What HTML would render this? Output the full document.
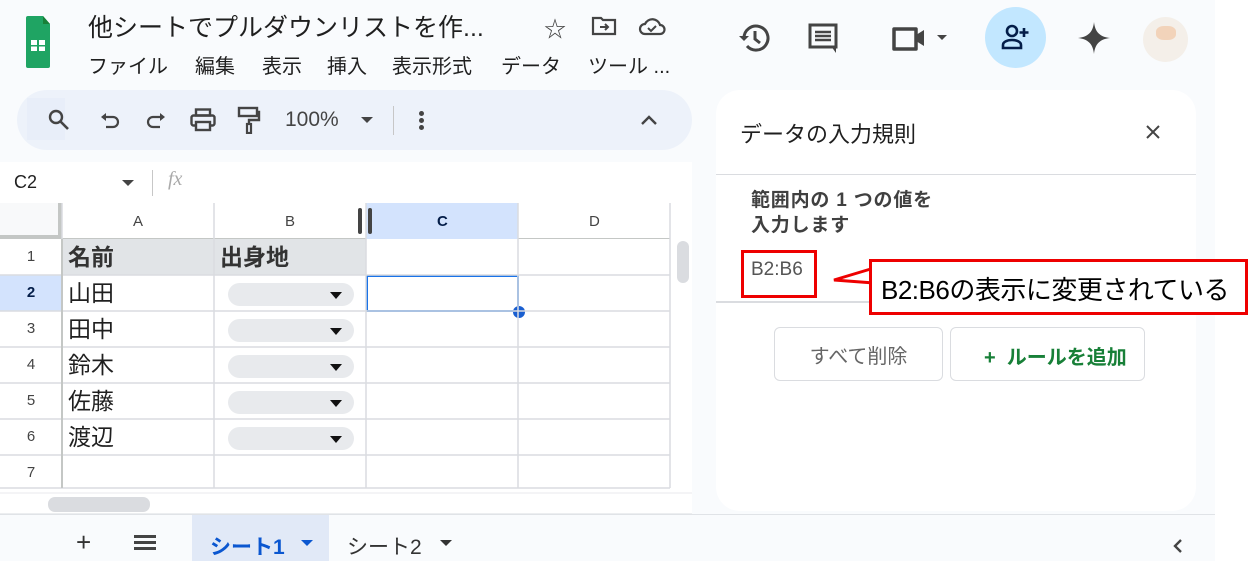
<!DOCTYPE html>
<html><head><meta charset="utf-8"><style>
*{box-sizing:border-box;margin:0;padding:0}
body{width:1248px;height:561px;overflow:hidden;background:#f9fbfd;font-family:"Liberation Sans","Noto Sans CJK JP",sans-serif;position:relative;color:#1f1f1f}
.a{position:absolute}
.ic{position:absolute}
.grid div{position:absolute}
.m{position:absolute;top:50px;font-size:20px;color:#1f1f1f;white-space:nowrap}
</style></head><body>
<!-- logo -->
<svg class="ic" style="left:26px;top:16px" width="24" height="52" viewBox="0 0 24 52"><path d="M2 0h15l7 8v42a2 2 0 0 1-2 2H2a2 2 0 0 1-2-2V2a2 2 0 0 1 2-2z" fill="#1fa463"/><path d="M17 0v8h7z" fill="#188038"/><rect x="5" y="24" width="14" height="11" fill="#fff"/><rect x="11" y="24" width="2" height="11" fill="#1fa463"/><rect x="5" y="29" width="14" height="1.5" fill="#1fa463"/></svg>
<div class="a" style="left:88px;top:8px;font-size:25px;color:#1f1f1f;white-space:nowrap">他シートでプルダウンリストを作...</div>
<div class="m" style="left:88px">ファイル</div>
<div class="m" style="left:195px">編集</div>
<div class="m" style="left:262px">表示</div>
<div class="m" style="left:327px">挿入</div>
<div class="m" style="left:392px">表示形式</div>
<div class="m" style="left:501px">データ</div>
<div class="m" style="left:588px">ツール ...</div>
<div class="a" style="left:544px;top:12px;font-size:22px;color:#444">☆</div>
<svg class="ic" style="left:591px;top:16px" width="26" height="20" viewBox="0 0 26 20"><path d="M2 2h8l2 2h12v14H2z" fill="none" stroke="#444" stroke-width="2.2"/><path d="M9 11h8M14 8l3 3-3 3" fill="none" stroke="#444" stroke-width="2"/></svg>
<svg class="ic" style="left:638px;top:16px" width="28" height="20" viewBox="0 0 28 20"><path d="M7 18a5 5 0 0 1 0-10 8 8 0 0 1 15 1 4.5 4.5 0 0 1 0 9z" fill="none" stroke="#444" stroke-width="2.2"/><path d="M10 12l3 3 5-5" fill="none" stroke="#444" stroke-width="2"/></svg>
<!-- right top icons -->
<svg class="ic" style="left:738px;top:22px" width="34" height="32" viewBox="0 0 34 32"><path d="M6 16a12 12 0 1 1 3 8" fill="none" stroke="#444" stroke-width="3"/><path d="M1 14l5 5 5-5" fill="#444"/><path d="M17 9v8l5 4" fill="none" stroke="#444" stroke-width="3"/></svg>
<svg class="ic" style="left:807px;top:22px" width="32" height="32" viewBox="0 0 32 32"><path d="M3 3h26v22H3z" fill="none" stroke="#444" stroke-width="3"/><path d="M8 10h16M8 14h16M8 18h16" stroke="#444" stroke-width="2.5"/><path d="M24 24h5v7z" fill="#444"/></svg>
<svg class="ic" style="left:892px;top:25px" width="60" height="26" viewBox="0 0 60 26"><path d="M2 4h22v20H2z" fill="none" stroke="#444" stroke-width="3.5" stroke-linejoin="round"/><path d="M24 10l8-5v16l-8-5z" fill="#444"/><path d="M45 10h10l-5 5z" fill="#444"/></svg>
<div class="a" style="left:985px;top:7px;width:61px;height:61px;border-radius:50%;background:#c2e7ff"></div>
<svg class="ic" style="left:1001px;top:24px" width="30" height="26" viewBox="0 0 30 26"><circle cx="11" cy="7" r="5" fill="none" stroke="#041e49" stroke-width="2.6"/><path d="M2 24v-3c0-3 4-5 9-5s9 2 9 5v3z" fill="none" stroke="#041e49" stroke-width="2.6"/><path d="M23 4v9M18.5 8.5h9" stroke="#041e49" stroke-width="2.6"/></svg>
<svg class="ic" style="left:1078px;top:22px" width="32" height="32" viewBox="0 0 32 32"><path d="M16 0C17 10 22 15 32 16 22 17 17 22 16 32 15 22 10 17 0 16 10 15 15 10 16 0z" fill="#444"/></svg>
<div class="a" style="left:1143px;top:17px;width:45px;height:45px;border-radius:50%;background:#f4efe9"></div>
<div class="a" style="left:1156px;top:26px;width:20px;height:14px;border-radius:40%;background:#f1c8a5;opacity:.7"></div>
<div class="a" style="left:1215px;top:0;width:33px;height:561px;background:#fff"></div>
<!-- toolbar -->
<div class="a" style="left:17px;top:90px;width:675px;height:60px;border-radius:30px;background:#edf2fa"></div>
<div class="a" style="left:27px;top:98px;width:38px;height:42px;background:#e8eef9"></div>
<svg class="ic" style="left:48px;top:109px" width="22" height="22" viewBox="0 0 22 22"><circle cx="8" cy="8" r="6" fill="none" stroke="#444" stroke-width="2.4"/><path d="M12.5 12.5L20 20" stroke="#444" stroke-width="2.6"/></svg>
<svg class="ic" style="left:100px;top:112px" width="20" height="18" viewBox="0 0 20 18"><path d="M4 5h9a5 5 0 0 1 0 10H6" fill="none" stroke="#444" stroke-width="2.2"/><path d="M1 5l5-4v8z" fill="#444"/></svg>
<svg class="ic" style="left:146px;top:112px" width="20" height="18" viewBox="0 0 20 18"><path d="M16 5H7a5 5 0 0 0 0 10h7" fill="none" stroke="#444" stroke-width="2.2"/><path d="M19 5l-5-4v8z" fill="#444"/></svg>
<svg class="ic" style="left:190px;top:108px" width="26" height="24" viewBox="0 0 26 24"><rect x="6" y="1.5" width="14" height="6" fill="none" stroke="#444" stroke-width="2.4"/><rect x="1.5" y="7.5" width="23" height="10" rx="2" fill="none" stroke="#444" stroke-width="2.4"/><rect x="6" y="14" width="14" height="8" fill="#edf2fa" stroke="#444" stroke-width="2.4"/></svg>
<svg class="ic" style="left:237px;top:106px" width="24" height="28" viewBox="0 0 24 28"><rect x="2" y="2" width="18" height="8" fill="none" stroke="#444" stroke-width="2.4"/><path d="M20 6h2v8H12v4" fill="none" stroke="#444" stroke-width="2.4"/><rect x="10" y="18" width="4" height="9" fill="none" stroke="#444" stroke-width="2.2"/></svg>
<div class="a" style="left:285px;top:108px;font-size:21px;color:#444">100%</div>
<div class="a" style="left:361px;top:117px;border-left:6px solid transparent;border-right:6px solid transparent;border-top:6px solid #444"></div>
<div class="a" style="left:393px;top:106px;width:1px;height:29px;background:#c7c7c7"></div>
<div class="a" style="left:419px;top:111px;width:5px;height:5px;border-radius:50%;background:#444;box-shadow:0 7px 0 #444,0 14px 0 #444"></div>
<svg class="ic" style="left:640px;top:114px" width="18" height="12" viewBox="0 0 18 12"><path d="M2 10l7-7 7 7" fill="none" stroke="#444" stroke-width="2.4"/></svg>
<!-- formula bar -->
<div class="a" style="left:0;top:162px;width:692px;height:41px;background:#fff"></div>
<div class="a" style="left:14px;top:172px;font-size:18px;color:#1f1f1f">C2</div>
<div class="a" style="left:122px;top:180px;border-left:6px solid transparent;border-right:6px solid transparent;border-top:6px solid #444"></div>
<div class="a" style="left:152px;top:170px;width:1px;height:26px;background:#c7c7c7"></div>
<div class="a" style="left:168px;top:168px;font-size:20px;color:#aaa;font-style:italic;font-family:'Liberation Serif',serif">fx</div>
<!-- grid -->
<div class="grid">
<div style="left:0;top:203px;width:692px;height:312px;background:#fff"></div>
<div style="left:0;top:203px;width:62px;height:36px;background:#f8f9fa;border-right:4px solid #c4c7c5;border-bottom:4px solid #c4c7c5"></div>
<div style="left:62px;top:203px;width:608px;height:36px;background:#fff;border-bottom:1px solid #c4c7c5"></div>
<div style="left:366px;top:203px;width:152px;height:36px;background:#d3e3fd"></div>
<div style="left:0;top:275px;width:62px;height:36px;background:#d3e3fd"></div>
<div style="left:62px;top:239px;width:304px;height:36px;background:#e1e4e7"></div>
<div style="left:366px;top:275px;width:153px;height:37px;border:2px solid #1a73e8"></div>
<div style="left:513px;top:306px;width:12px;height:12px;border-radius:50%;background:#1a5fd0"></div>
<div style="left:358px;top:208px;width:4px;height:26px;background:#444;border-radius:2px"></div>
<div style="left:368px;top:208px;width:4px;height:26px;background:#444;border-radius:2px"></div>
</div>
<svg class="a" style="left:0;top:203px" width="692" height="312">
<g stroke="#dadce0" stroke-width="1.5">
<line x1="62" y1="0" x2="62" y2="285"/><line x1="214" y1="0" x2="214" y2="285"/><line x1="366" y1="0" x2="366" y2="285"/><line x1="518" y1="0" x2="518" y2="285"/><line x1="670" y1="0" x2="670" y2="285"/>
<line x1="0" y1="72" x2="670" y2="72"/><line x1="0" y1="108" x2="670" y2="108"/><line x1="0" y1="144" x2="670" y2="144"/><line x1="0" y1="180" x2="670" y2="180"/><line x1="0" y1="216" x2="670" y2="216"/><line x1="0" y1="252" x2="670" y2="252"/><line x1="0" y1="285" x2="670" y2="285"/>
</g>
<line x1="62" y1="36" x2="62" y2="285" stroke="#c4c7c5" stroke-width="2"/>
<rect x="677" y="38" width="12" height="42" rx="6" fill="#dadce0"/>
<rect x="48" y="294" width="102" height="15" rx="7" fill="#dadce0"/>
<line x1="0" y1="290" x2="692" y2="290" stroke="#e8eaed"/>
<line x1="0" y1="311" x2="692" y2="311" stroke="#dadce0"/>
</svg>
<div class="a" style="left:0;top:213px;width:670px;font-size:15px;color:#444">
<span class="a" style="left:133px">A</span><span class="a" style="left:285px">B</span><span class="a" style="left:437px;color:#041e49;font-weight:bold">C</span><span class="a" style="left:589px">D</span></div>
<div class="a" style="left:0;top:239px;width:62px;font-size:15px;color:#444;text-align:center;line-height:36px">1<br><b style="color:#041e49">2</b><br>3<br>4<br>5<br>6<br>7</div>
<div class="a" style="left:68px;top:239px;font-size:23px;line-height:36px;color:#1f1f1f"><b style="color:#333">名前</b><br>山田<br>田中<br>鈴木<br>佐藤<br>渡辺</div>
<div class="a" style="left:220px;top:239px;font-size:23px;line-height:36px;font-weight:bold;color:#333">出身地</div>
<div class="a" style="left:228px;top:283px">
<div class="a" style="top:0;width:126px;height:23px;border-radius:12px;background:#e8eaed"></div>
<div class="a" style="top:36px;width:126px;height:23px;border-radius:12px;background:#e8eaed"></div>
<div class="a" style="top:72px;width:126px;height:23px;border-radius:12px;background:#e8eaed"></div>
<div class="a" style="top:108px;width:126px;height:23px;border-radius:12px;background:#e8eaed"></div>
<div class="a" style="top:144px;width:126px;height:23px;border-radius:12px;background:#e8eaed"></div>
<div class="a" style="left:102px;top:9px;border-left:6px solid transparent;border-right:6px solid transparent;border-top:7px solid #111"></div>
<div class="a" style="left:102px;top:45px;border-left:6px solid transparent;border-right:6px solid transparent;border-top:7px solid #111"></div>
<div class="a" style="left:102px;top:81px;border-left:6px solid transparent;border-right:6px solid transparent;border-top:7px solid #111"></div>
<div class="a" style="left:102px;top:117px;border-left:6px solid transparent;border-right:6px solid transparent;border-top:7px solid #111"></div>
<div class="a" style="left:102px;top:153px;border-left:6px solid transparent;border-right:6px solid transparent;border-top:7px solid #111"></div>
</div>
<!-- tabs -->
<div class="a" style="left:0;top:514px;width:1215px;height:1px;background:#e0e3e7"></div>
<div class="a" style="left:76px;top:527px;font-size:26px;color:#333;line-height:30px">+</div>
<div class="a" style="left:134px;top:535px;width:22px;height:2.5px;background:#444;box-shadow:0 6px 0 #444,0 12px 0 #444"></div>
<div class="a" style="left:192px;top:515px;width:137px;height:46px;background:#e1e9f7"></div>
<div class="a" style="left:210px;top:531px;font-size:21px;color:#0b57d0;font-weight:bold">シート1</div>
<div class="a" style="left:301px;top:540px;border-left:6px solid transparent;border-right:6px solid transparent;border-top:6px solid #0b57d0"></div>
<div class="a" style="left:347px;top:531px;font-size:21px;color:#333">シート2</div>
<div class="a" style="left:440px;top:540px;border-left:6px solid transparent;border-right:6px solid transparent;border-top:6px solid #333"></div>
<svg class="ic" style="left:1172px;top:538px" width="12" height="16" viewBox="0 0 12 16"><path d="M9 2L3 8l6 6" fill="none" stroke="#444" stroke-width="2.4"/></svg>
<!-- panel -->
<div class="a" style="left:716px;top:90px;width:480px;height:421px;background:#fff;border-radius:24px"></div>
<div class="a" style="left:740px;top:117px;font-size:22px;color:#1f1f1f">データの入力規則</div>
<svg class="ic" style="left:1145px;top:124px" width="16" height="16" viewBox="0 0 16 16"><path d="M2 2l12 12M14 2L2 14" stroke="#444" stroke-width="2"/></svg>
<div class="a" style="left:716px;top:174px;width:480px;height:1px;background:#dadce0"></div>
<div class="a" style="left:751px;top:188px;font-size:19px;line-height:25px;color:#1f1f1f;font-weight:bold;opacity:.85;letter-spacing:0.8px">範囲内の 1 つの値を<br>入力します</div>
<div class="a" style="left:716px;top:301px;width:160px;height:1.5px;background:#dadce0"></div>
<div class="a" style="left:741px;top:250px;width:76px;height:48px;border:3px solid #e00"></div>
<div class="a" style="left:751px;top:259px;font-size:19px;color:#555">B2:B6</div>
<svg class="ic" style="left:830px;top:259px" width="50" height="40" viewBox="0 0 50 40"><path d="M44 9L4 21 44 24" fill="#fff" stroke="#e00" stroke-width="3"/></svg>
<div class="a" style="left:869px;top:259px;width:379px;height:56px;border:3px solid #e00;background:#fff"></div>
<div class="a" style="left:881px;top:270px;font-size:26px;color:#000;letter-spacing:-0.5px;white-space:nowrap">B2:B6の表示に変更されている</div>
<div class="a" style="left:774px;top:327px;width:169px;height:54px;border:1px solid #dadce0;border-radius:6px"></div>
<div class="a" style="left:774px;top:340px;width:169px;text-align:center;font-size:20px;color:#666">すべて削除</div>
<div class="a" style="left:950px;top:327px;width:195px;height:54px;border:1px solid #dadce0;border-radius:6px"></div>
<div class="a" style="left:984px;top:341px;font-size:20px;color:#188038;font-weight:bold;white-space:nowrap">+&nbsp;&nbsp;ルールを追加</div>
</body></html>
